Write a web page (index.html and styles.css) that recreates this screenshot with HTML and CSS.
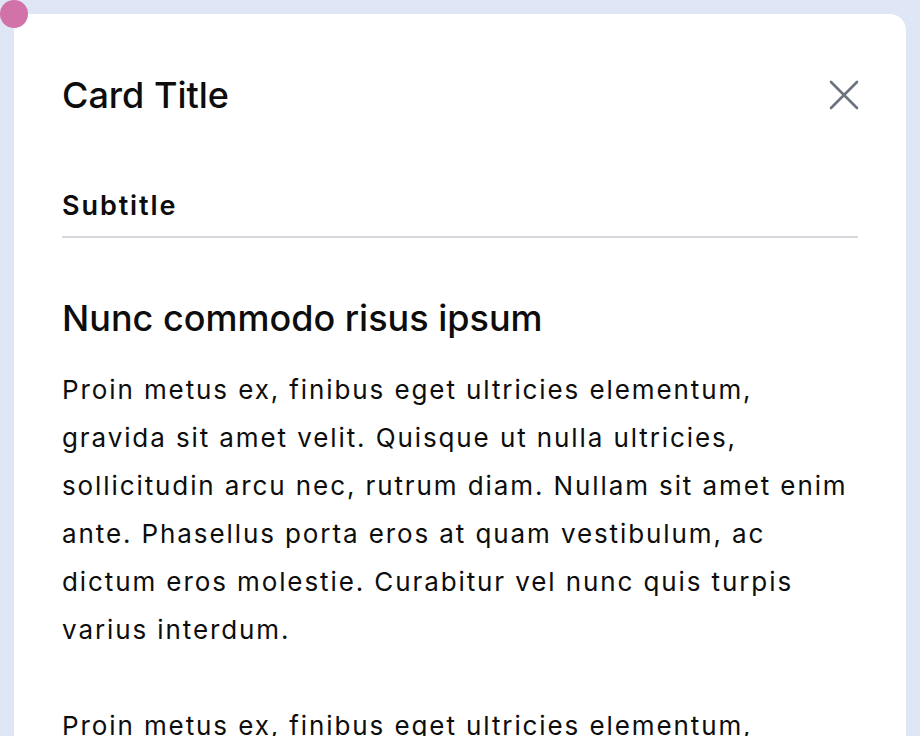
FILE: index.html
```html
<!DOCTYPE html>
<html lang="en">
<head>
  <meta charset="UTF-8">
  <meta name="viewport" content="width=device-width, initial-scale=1.0">
  <title>Card</title>
  <link rel="stylesheet" href="styles.css">
</head>
<body>

<span class="dot"></span>

<div class="card">
  <div class="card-header">
    <h1>Card Title</h1>
    <button class="close" aria-label="Close">
      <svg width="30" height="30" viewBox="0 0 30 30" fill="none" stroke="#6b7280" stroke-width="2.6" stroke-linecap="round">
        <path d="M2 2L28 28M28 2L2 28"/>
      </svg>
    </button>
  </div>

  <h2 class="subtitle">Subtitle</h2>

  <div class="content">
    <h3>Nunc commodo risus ipsum</h3>
    <p>Proin metus ex, finibus eget ultricies elementum, gravida sit amet velit. Quisque ut nulla ultricies, sollicitudin arcu nec, rutrum diam. Nullam sit amet enim ante. Phasellus porta eros at quam vestibulum, ac dictum eros molestie. Curabitur vel nunc quis turpis varius interdum.</p>
    <p>Proin metus ex, finibus eget ultricies elementum, gravida sit amet velit. Quisque ut nulla ultricies, sollicitudin arcu nec, rutrum diam.</p>
  </div>
</div>

</body>
</html>
```

FILE: styles.css
```css
body { margin: 0; padding: 14px; background: #dfe6f5; font-family: Inter, "Noto Sans", sans-serif; color: #0d0d0d; }
.dot { position: absolute; top: 0; left: 0; width: 28px; height: 28px; border-radius: 50%; background: #d172a9; }
.card { background: #fff; border-radius: 16px; padding: 56px 48px 48px; }
.card-header { display: flex; justify-content: space-between; align-items: center; }
.card-header h1 { margin: 0; font-size: 36px; line-height: 50px; font-weight: 500; }
.close { background: none; border: none; padding: 0; margin-right: -1px; cursor: pointer; display: flex; }
.subtitle { margin: 70px 0 0; padding-bottom: 14px; border-bottom: 2px solid #d5d8dd; font-size: 27px; line-height: 32px; font-weight: 600; letter-spacing: 1.9px; }
.content h3 { margin: 58px 0 26px; font-size: 36px; line-height: 44px; font-weight: 500; }
.content p { margin: 0 0 48px; font-size: 26px; line-height: 48px; letter-spacing: 1.9px; }
```
